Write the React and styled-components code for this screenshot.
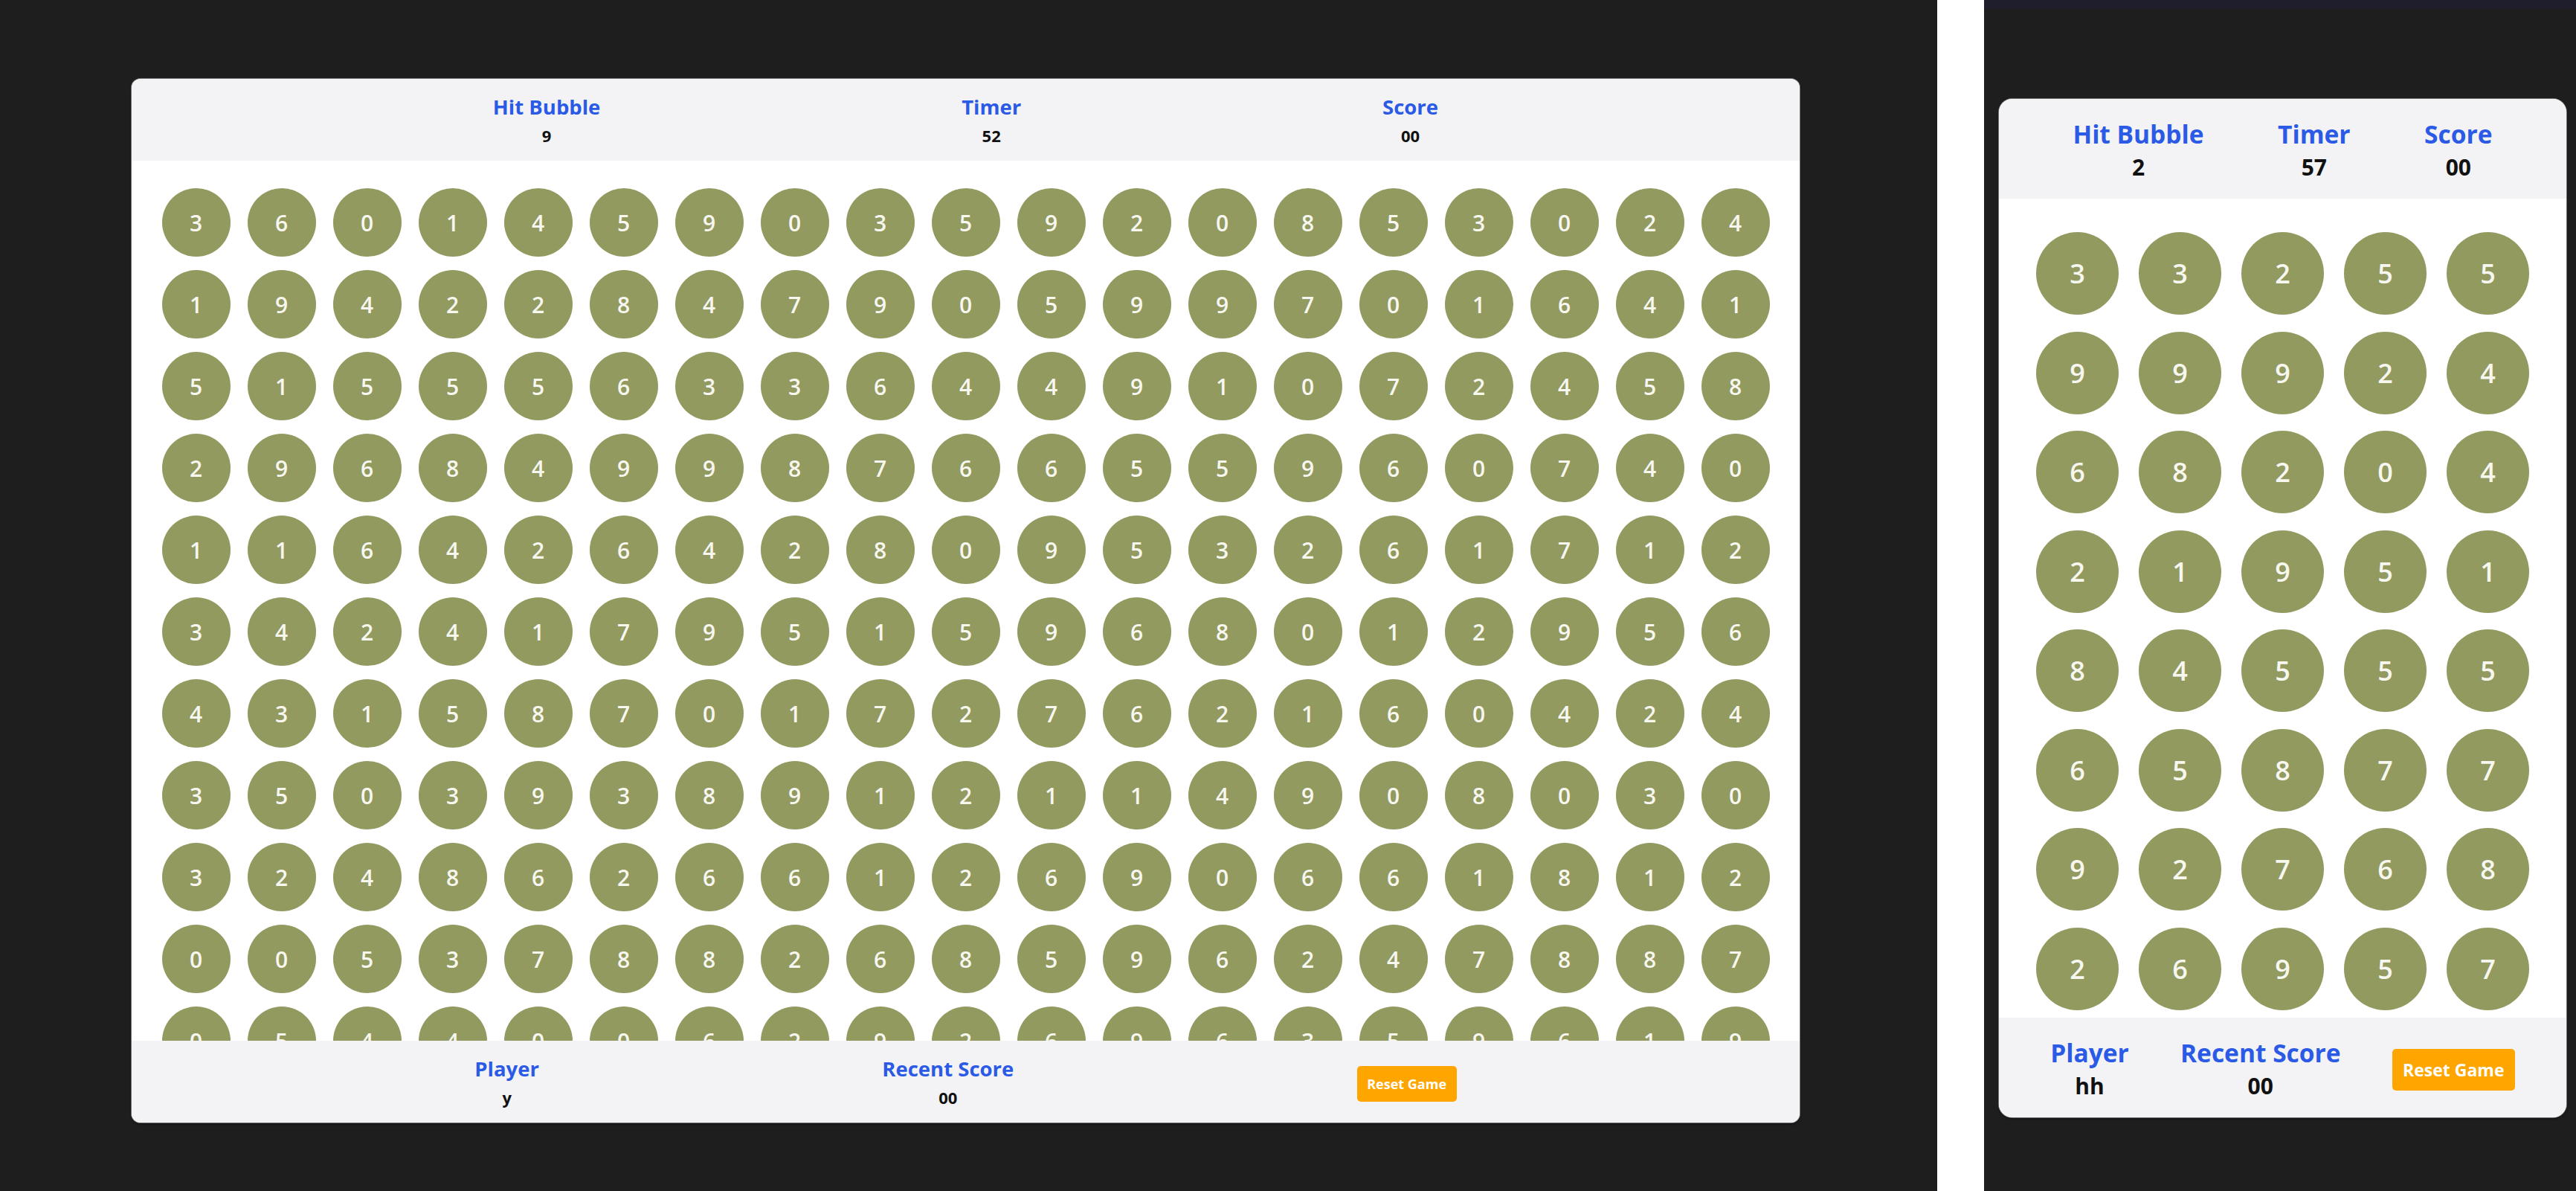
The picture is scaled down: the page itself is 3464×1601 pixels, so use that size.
import React from "react";
import styled, { createGlobalStyle } from "styled-components";

const GlobalStyle = createGlobalStyle`
  html, body {
    margin: 0;
    padding: 0;
    background: #1e1e1e;
  }
  body {
    font-family: "Open Sans", "Noto Sans", sans-serif;
  }
`;

const sizes = {
  desktop: {
    width: 2243,
    height: 1403,
    radius: 12,
    bar: 110,
    nudge: 6,
    label: 27.5,
    value: 22,
    labelLine: 36,
    valueLine: 40,
    bubble: 92,
    bubbleFont: 30,
    colGap: 23,
    rowGap: 18,
    fieldTop: 37,
    button: { w: 134, h: 48, font: 18 },
  },
  mobile: {
    width: 763,
    height: 1369,
    radius: 18,
    bar: 134,
    nudge: 6,
    label: 33.5,
    value: 30,
    labelLine: 44,
    valueLine: 46,
    bubble: 111,
    bubbleFont: 36,
    colGap: 27,
    rowGap: 22.5,
    fieldTop: 45,
    button: { w: 165, h: 56, font: 23 },
  },
};

const Page = styled.div`
  display: flex;
  width: 3464px;
  height: 1601px;
  overflow: hidden;
  background: #1e1e1e;
`;

const DesktopPane = styled.div`
  width: 2605px;
  flex-shrink: 0;
  padding: 106px 0 0 177px;
  box-sizing: border-box;
`;

const Divider = styled.div`
  width: 63px;
  flex-shrink: 0;
  background: #ffffff;
`;

const MobilePane = styled.div`
  flex: 1;
  display: flex;
  flex-direction: column;
`;

const TopBar = styled.div`
  height: 12px;
  background: #1e1e2c;
`;

const MobileStage = styled.div`
  padding: 121px 0 0 20px;
`;

const Card = styled.div`
  width: ${(p) => p.$s.width}px;
  height: ${(p) => p.$s.height}px;
  border-radius: ${(p) => p.$s.radius}px;
  background: #ffffff;
  overflow: hidden;
  display: flex;
  flex-direction: column;
  box-shadow: 0 0 0 1px rgba(190, 190, 190, 0.55), 0 2px 3px rgba(0, 0, 0, 0.5);
`;

const Bar = styled.div`
  height: ${(p) => p.$s.bar}px;
  flex-shrink: 0;
  box-sizing: border-box;
  padding-top: ${(p) => p.$s.nudge}px;
  background: #f3f3f5;
  display: flex;
  align-items: center;
  justify-content: space-evenly;
`;

const Stat = styled.div`
  display: flex;
  flex-direction: column;
  align-items: center;
`;

const Label = styled.div`
  color: #2a5ae6;
  font-weight: 700;
  font-size: ${(p) => p.$s.label}px;
  line-height: ${(p) => p.$s.labelLine}px;
  white-space: nowrap;
`;

const Value = styled.div`
  color: #111111;
  font-weight: 700;
  font-size: ${(p) => p.$s.value}px;
  line-height: ${(p) => p.$s.valueLine}px;
`;

const Field = styled.div`
  flex: 1;
  overflow: hidden;
  display: grid;
  grid-template-columns: repeat(${(p) => p.$cols}, ${(p) => p.$s.bubble}px);
  grid-auto-rows: ${(p) => p.$s.bubble}px;
  column-gap: ${(p) => p.$s.colGap}px;
  row-gap: ${(p) => p.$s.rowGap}px;
  justify-content: center;
  align-content: start;
  padding-top: ${(p) => p.$s.fieldTop}px;
`;

const Bubble = styled.div`
  width: ${(p) => p.$s.bubble}px;
  height: ${(p) => p.$s.bubble}px;
  border-radius: 50%;
  background: #929a60;
  color: #f7f7f0;
  display: flex;
  align-items: center;
  justify-content: center;
  font-weight: 600;
  font-size: ${(p) => p.$s.bubbleFont}px;
`;

const ResetButton = styled.button`
  width: ${(p) => p.$s.button.w}px;
  height: ${(p) => p.$s.button.h}px;
  border: none;
  border-radius: 5px;
  background: #ffa500;
  color: #ffffff;
  font-family: inherit;
  font-weight: 700;
  font-size: ${(p) => p.$s.button.font}px;
  padding: 0;
  white-space: nowrap;
  cursor: pointer;
`;

const desktopRows = [
  "3601459035920853024",
  "1942284790599701641",
  "5155563364491072458",
  "2968499876655960740",
  "1164264280953261712",
  "3424179515968012956",
  "4315870172762160424",
  "3503938912114908030",
  "3248626612690661812",
  "0053788268596247887",
  "0544006292696359619",
];

const mobileRows = [
  "33255",
  "99924",
  "68204",
  "21951",
  "84555",
  "65877",
  "92768",
  "26957",
];

const Game = ({ s, cols, rows, hit, timer, player }) => (
  <Card $s={s}>
    <Bar $s={s}>
      <Stat>
        <Label $s={s}>Hit Bubble</Label>
        <Value $s={s}>{hit}</Value>
      </Stat>
      <Stat>
        <Label $s={s}>Timer</Label>
        <Value $s={s}>{timer}</Value>
      </Stat>
      <Stat>
        <Label $s={s}>Score</Label>
        <Value $s={s}>00</Value>
      </Stat>
    </Bar>
    <Field $s={s} $cols={cols}>
      {rows.join("").split("").map((d, i) => (
        <Bubble key={i} $s={s}>
          {d}
        </Bubble>
      ))}
    </Field>
    <Bar $s={s}>
      <Stat>
        <Label $s={s}>Player</Label>
        <Value $s={s}>{player}</Value>
      </Stat>
      <Stat>
        <Label $s={s}>Recent Score</Label>
        <Value $s={s}>00</Value>
      </Stat>
      <ResetButton $s={s}>Reset Game</ResetButton>
    </Bar>
  </Card>
);

export default function App() {
  return (
    <>
      <GlobalStyle />
      <Page>
        <DesktopPane>
          <Game
            s={sizes.desktop}
            cols={19}
            rows={desktopRows}
            hit="9"
            timer="52"
            player="y"
          />
        </DesktopPane>
        <Divider />
        <MobilePane>
          <TopBar />
          <MobileStage>
            <Game
              s={sizes.mobile}
              cols={5}
              rows={mobileRows}
              hit="2"
              timer="57"
              player="hh"
            />
          </MobileStage>
        </MobilePane>
      </Page>
    </>
  );
}
